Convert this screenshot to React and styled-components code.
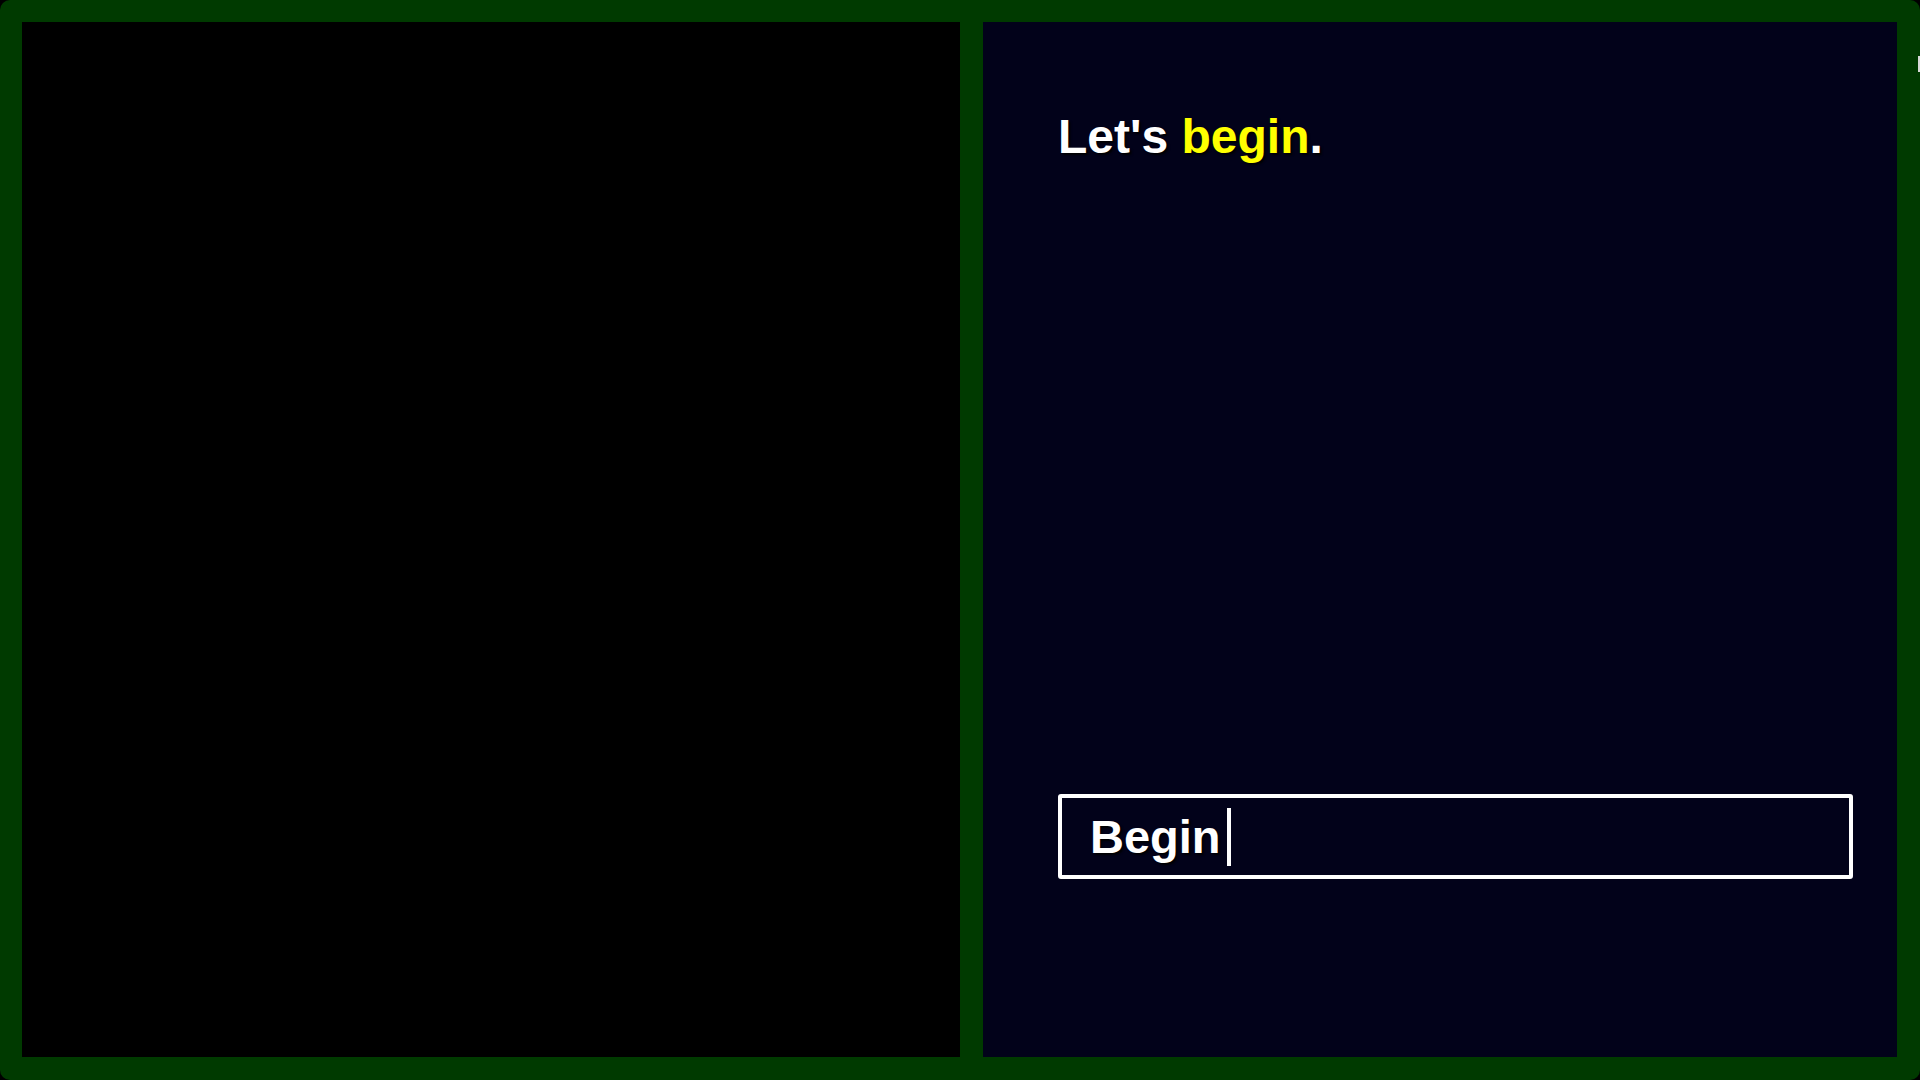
import React from "react";
import styled, { createGlobalStyle } from "styled-components";

const GlobalStyle = createGlobalStyle`
  html, body {
    margin: 0;
    padding: 0;
    background: #000;
    overflow: hidden;
  }
  body {
    font-family: "Liberation Sans", Arial, sans-serif;
  }
`;

const Frame = styled.div`
  position: relative;
  width: 1920px;
  height: 1080px;
  box-sizing: border-box;
  padding: 22px 23px 23px 22px;
  background: #003a00;
  border-radius: 10px;
  display: grid;
  grid-template-columns: 938px 914px;
  column-gap: 23px;
`;

const LeftPanel = styled.section`
  background: #000000;
`;

const RightPanel = styled.section`
  background: #02021a;
  display: flex;
  flex-direction: column;
  padding: 91px 44px 178px 75px;
  box-sizing: border-box;
`;

const Heading = styled.h1`
  margin: 0;
  font-family: "Liberation Sans", Arial, sans-serif;
  font-weight: 700;
  font-size: 48px;
  line-height: 1;
  color: #ffffff;
  text-shadow: 2px 2px 2px rgba(0, 0, 0, 0.9);
`;

const Highlight = styled.span`
  color: #ffff00;
`;

const InputBox = styled.div`
  margin-top: auto;
  height: 85px;
  box-sizing: border-box;
  border: 4px solid #ffffff;
  border-radius: 3px;
  display: flex;
  align-items: center;
  padding-left: 28px;
`;

const InputText = styled.span`
  font-family: "Liberation Sans", Arial, sans-serif;
  font-weight: 700;
  font-size: 47px;
  line-height: 1;
  color: #ffffff;
  text-shadow: 2px 2px 2px rgba(0, 0, 0, 0.9);
`;

const Caret = styled.span`
  display: inline-block;
  width: 4px;
  height: 58px;
  margin-left: 6px;
  background: #ffffff;
`;

const EdgeMark = styled.div`
  position: absolute;
  right: 0;
  top: 56px;
  width: 2px;
  height: 16px;
  background: #d8d8d8;
`;

export default function App() {
  return (
    <>
      <GlobalStyle />
      <Frame>
        <LeftPanel />
        <RightPanel>
          <Heading>
            Let's <Highlight>begin</Highlight>.
          </Heading>
          <InputBox>
            <InputText>Begin</InputText>
            <Caret />
          </InputBox>
        </RightPanel>
        <EdgeMark />
      </Frame>
    </>
  );
}
